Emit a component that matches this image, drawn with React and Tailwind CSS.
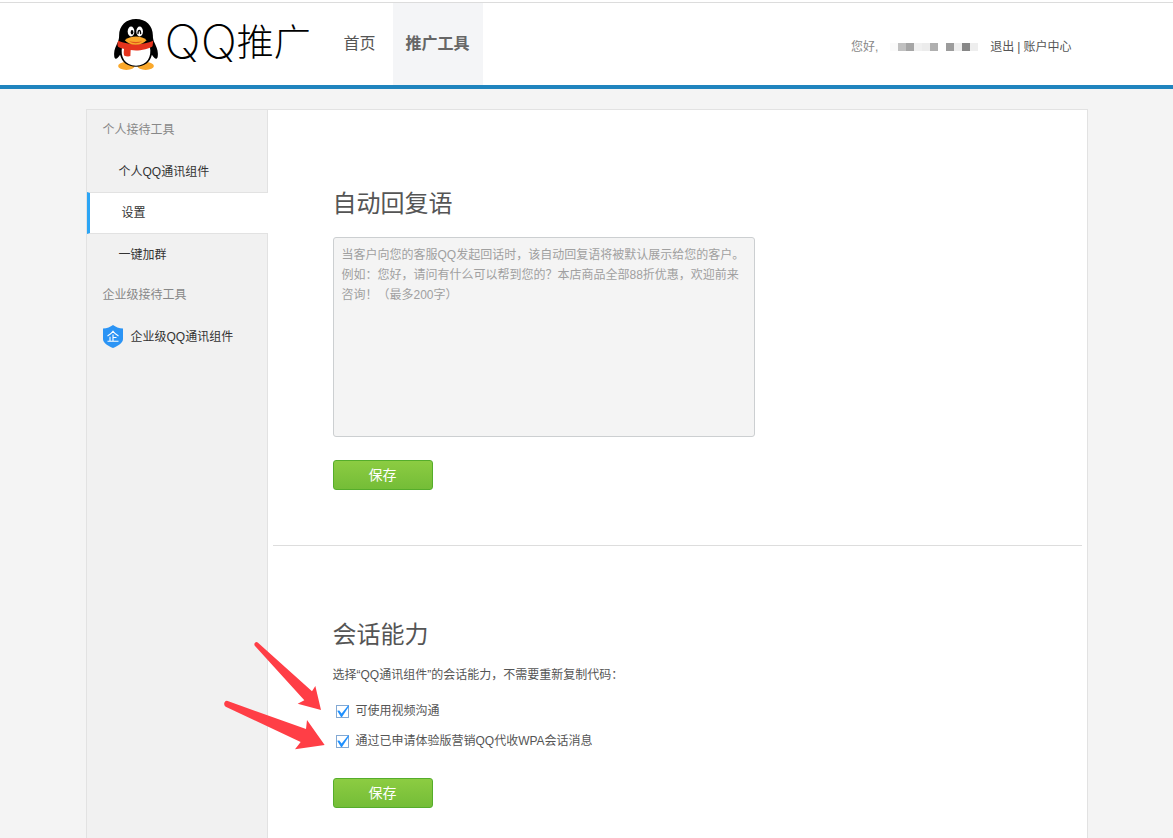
import { useState } from "react";

const GROUPS = [
  {
    title: "个人接待工具",
    items: [{ label: "个人QQ通讯组件" }, { label: "设置", active: true }, { label: "一键加群" }],
  },
  {
    title: "企业级接待工具",
    items: [{ label: "企业级QQ通讯组件", shield: true }],
  },
];

const REPLY_HINT =
  "当客户向您的客服QQ发起回话时，该自动回复语将被默认展示给您的客户。\n例如：您好，请问有什么可以帮到您的？本店商品全部88折优惠，欢迎前来咨询！（最多200字）";

// masked account name
const MASK = [
  "bg-[#fafafa]",
  "bg-[#c0c0c0]",
  "bg-[#a5a5a5]",
  "bg-[#f0f0f0]",
  "bg-[#ececec]",
  "bg-[#afafaf]",
  "bg-white",
  "bg-[#9c9c9c]",
  "bg-[#eeeeee]",
  "bg-[#878787]",
  "bg-[#eeeeee]",
];

function Penguin() {
  return (
    <svg viewBox="0 0 132 154" className="h-[51px] w-11 shrink-0" aria-hidden="true">
      <ellipse cx="37" cy="142" rx="25" ry="12" fill="#faa82b" />
      <ellipse cx="95" cy="142" rx="25" ry="12" fill="#faa82b" />
      <path
        d="M66 0C36 0 15 20 15 50c0 7-1 12-3 18C6 80-1 94 0 108c0 8 2 12 5 12 4 0 9-6 13-12 5 22 22 36 48 36s43-14 48-36c4 6 9 12 13 12 3 0 5-4 5-12 1-14-6-28-12-40-2-6-3-11-3-18C117 20 96 0 66 0z"
        fill="#000"
      />
      <path d="M24 84c-6 30 8 57 42 57s48-27 42-57c-26 10-58 10-84 0z" fill="#fff" />
      <ellipse cx="51" cy="38" rx="10" ry="15" fill="#fff" />
      <ellipse cx="77" cy="38" rx="10" ry="15" fill="#fff" />
      <ellipse cx="54" cy="40" rx="4" ry="7" fill="#000" />
      <path d="M72 44c0-13 8-13 8 0" fill="none" stroke="#000" strokeWidth="4" strokeLinecap="round" />
      <path d="M12 66c32 14 76 14 106 0l-2 16c-5 6-36 13-50 13-20 0-45-5-54-11-3-4-2-12 0-18z" fill="#e5331d" />
      <path d="M31 86l19 5-1 21c-6 2-14 1-19-2-2-8-1-16 1-24z" fill="#e5331d" />
      <path d="M32 64c9-7 20-11 34-11s24 4 32 11c-7 8-19 14-33 14s-26-6-33-14z" fill="#faa82b" />
      <path d="M45 67c14 3 28 3 40 0-6 4-13 6-20 6s-15-2-20-6z" fill="#e0561c" />
    </svg>
  );
}

function Shield() {
  return (
    <svg viewBox="0 0 20 23" className="h-[23px] w-5" aria-hidden="true">
      <path
        d="M10 0C7.500 2 4 3.300 0 3.500V14c0 4 5 7 10 9 5-2 10-5 10-9V3.500C16 3.300 12.500 2 10 0z"
        fill="#2b94f5"
      />
      <path
        d="M4.500 11C7 9.500 9 8 10 6.300c1 1.700 3 3.200 5.500 4.700M10 9.500V16M10 12.500h3.500M7 11.800V16M4.500 16.300h11"
        fill="none"
        stroke="#fff"
        strokeWidth="1.100"
      />
    </svg>
  );
}

function Arrows() {
  return (
    <svg
      viewBox="0 0 360 390"
      className="pointer-events-none absolute -top-[66px] -left-[118px] h-[130px] w-[120px]"
      aria-hidden="true"
    >
      <g fill="#ff3e46">
        <path d="M129 38L291 184L301 168L318 240L248 221L268 211L120 48Q116 42 120 38Q125 34 129 38Z" />
        <path d="M38 213L273 297L276 270L329 345L240 358L257 336L32 230Q26 226 28 218Q31 211 38 213Z" />
      </g>
    </svg>
  );
}

function SaveButton({ className }) {
  return (
    <button
      type="button"
      className={`block h-[30px] w-[100px] rounded-[3px] border border-[#55ad2b] bg-linear-to-b from-[#8ccc42] to-[#74bd37] text-sm leading-7 text-white ${className}`}
    >
      保存
    </button>
  );
}

function CheckRow({ label, checked, onChange }) {
  return (
    <label className="flex h-[30px] items-center gap-[7px] pl-[3px]">
      <span className="relative block size-[13px]">
        <input
          type="checkbox"
          checked={checked}
          onChange={onChange}
          className="peer block size-[13px] appearance-none border border-[#83a9d3] bg-white"
        />
        <svg viewBox="0 0 13 13" className="pointer-events-none absolute inset-0 hidden size-[13px] peer-checked:block" aria-hidden="true">
          <path d="M1.200 5.800L3.300 5.500L5.600 8.500L12.300 0.300L13 1.300L6 12H5Z" fill="#1e90ff" />
        </svg>
      </span>
      {label}
    </label>
  );
}

function Sidebar() {
  return (
    <nav className="flex w-[181px] shrink-0 flex-col bg-[#f1f1f1] text-[#333]">
      {GROUPS.map((group) => (
        <div key={group.title}>
          <h3 className="h-[41px] border-r border-[#e2e2e2] pl-4 leading-10 text-[#888]">{group.title}</h3>
          {group.items.map((item) => (
            <a
              key={item.label}
              href="#"
              className={
                item.active
                  ? "flex h-[42px] items-center border-y border-l-3 border-y-[#e2e2e2] border-l-[#2ba5f5] bg-white pl-8"
                  : `flex h-[41px] items-center border-r border-[#e2e2e2] ${item.shield ? "gap-2 pl-4" : "pl-8"}`
              }
            >
              {item.shield && <Shield />}
              {item.label}
            </a>
          ))}
        </div>
      ))}
      <div className="flex-1 border-r border-[#e2e2e2]" />
    </nav>
  );
}

export default function App() {
  const [reply, setReply] = useState("");
  const [video, setVideo] = useState(true);
  const [wpa, setWpa] = useState(true);

  return (
    <div
      lang="zh-CN"
      className="flex min-h-screen flex-col bg-[#f4f4f4] font-['Liberation_Sans','Noto_Sans_CJK_SC',sans-serif] text-xs text-[#555]"
    >
      <header className="border-b-4 border-[#1f84be] bg-white pt-0.5">
        <div className="border-t border-[#dcdcdc]">
          <div className="mx-auto flex h-[82px] max-w-[1002px] items-center pr-4 pl-7">
            <a href="#" className="flex w-[201px] shrink-0 items-center gap-[7px] whitespace-nowrap text-black">
              <Penguin />
              <span className="flex items-center pb-2">
                <span className="pt-1 font-['Inter',sans-serif] text-[48px] leading-[52px] font-extralight">QQ</span>
                <span className="font-['Noto_Sans_CJK_SC',sans-serif] text-[37px] leading-[52px] font-light">推广</span>
              </span>
            </a>
            <nav className="ml-3 flex shrink-0 self-stretch text-base leading-[82px]">
              <a href="#" className="px-[17px]">首页</a>
              <a href="#" className="bg-[#f4f5f7] px-[13px] font-bold text-[#666]">推广工具</a>
            </nav>
            <div className="ml-auto flex items-center pt-[6px]">
              <span className="text-[#888]">您好,</span>
              <span className="ml-3 flex">
                {MASK.map((tone, i) => (
                  <span key={i} className={`size-2 ${tone}`} />
                ))}
              </span>
              <a href="#" className="ml-3">退出</a>
              <span className="mx-[3px]">|</span>
              <a href="#">账户中心</a>
            </div>
          </div>
        </div>
      </header>

      <div className="mx-auto mt-5 flex w-full max-w-[1002px] flex-1 border border-b-0 border-[#e2e2e2] bg-white">
        <Sidebar />
        <main className="min-w-0 flex-1 px-[5px]">
          <section className="border-b border-[#dddddd] px-[60px] pt-[78px] pb-[55px]">
            <h2 className="text-2xl leading-8">
              <label htmlFor="reply">自动回复语</label>
            </h2>
            <textarea
              id="reply"
              value={reply}
              onChange={(e) => setReply(e.target.value)}
              placeholder={REPLY_HINT}
              className="mt-[17px] block h-[200px] w-full max-w-[422px] resize-none rounded-[3px] border border-[#cccfd1] bg-[#f4f4f4] px-2 py-[7px] leading-5 placeholder:text-[#a0a0a0]"
            />
            <SaveButton className="mt-[23px]" />
          </section>

          <section className="px-[60px] pt-[73px] pb-[30px]">
            <h2 className="text-2xl leading-8">会话能力</h2>
            <p className="mt-[14px] leading-5">选择“QQ通讯组件”的会话能力，不需要重新复制代码：</p>
            <div className="relative mt-[11px]">
              <CheckRow label="可使用视频沟通" checked={video} onChange={(e) => setVideo(e.target.checked)} />
              <CheckRow
                label="通过已申请体验版营销QQ代收WPA会话消息"
                checked={wpa}
                onChange={(e) => setWpa(e.target.checked)}
              />
              <Arrows />
            </div>
            <SaveButton className="mt-[22px]" />
          </section>
        </main>
      </div>
    </div>
  );
}
